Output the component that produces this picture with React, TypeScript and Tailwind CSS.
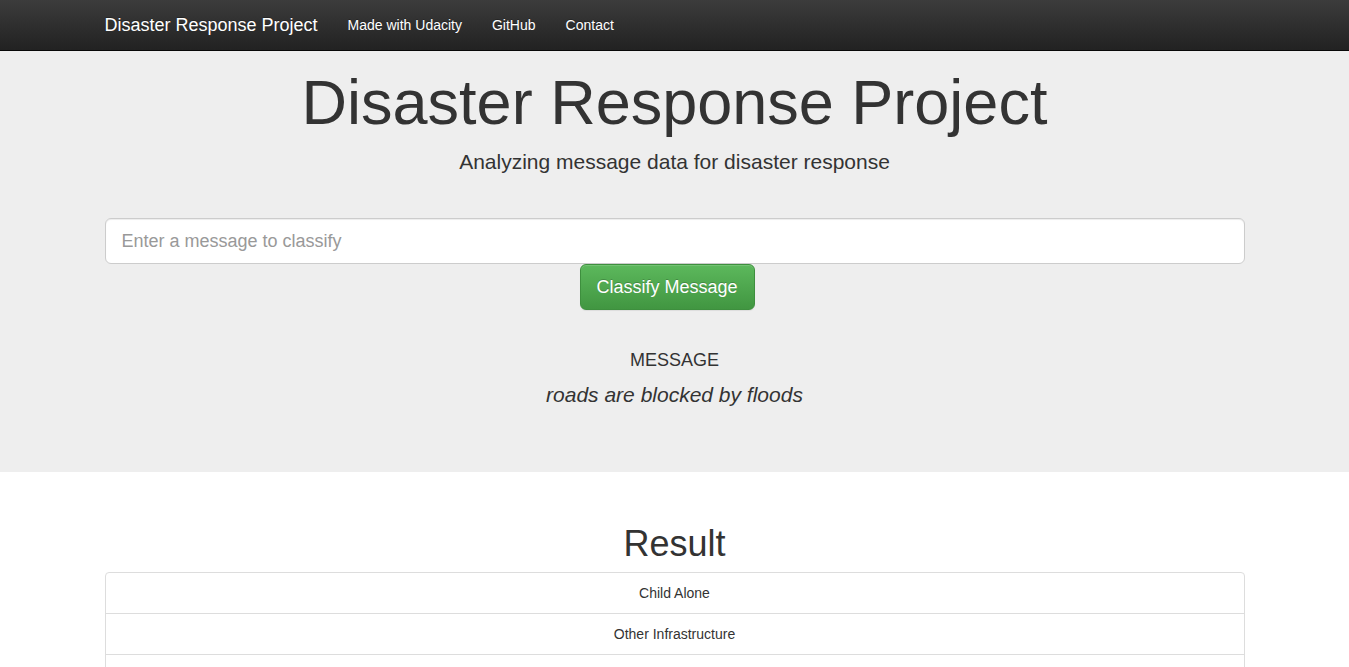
import React from 'react';

const categories = [
  'Child Alone',
  'Other Infrastructure',
  'Infrastructure Related',
  'Aid Centers',
  'Shops',
  'Hospitals',
  'Tools',
  'Fire',
  'Missing People',
  'Offer',
];

const navLinks = ['Made with Udacity', 'GitHub', 'Contact'];

export default function App() {
  return (
    <div className="min-h-screen bg-white text-[#333] font-['Liberation_Sans',Arial,sans-serif]">
      <nav className="h-[51px] border-b border-[#080808] bg-gradient-to-b from-[#3c3c3c] to-[#222]">
        <div className="w-[1170px] mx-auto px-[15px] h-[50px] flex items-center">
          <a className="text-[18px] leading-[20px] text-white pr-[15px] [text-shadow:0_-1px_0_rgba(0,0,0,0.25)]">
            Disaster Response Project
          </a>
          {navLinks.map((l) => (
            <a
              key={l}
              className="text-[14px] leading-[20px] text-white px-[15px] [text-shadow:0_-1px_0_rgba(0,0,0,0.25)]"
            >
              {l}
            </a>
          ))}
        </div>
      </nav>

      <div className="bg-[#eee] pt-[17px] pb-[62px]">
        <div className="w-[1170px] mx-auto px-[15px] text-center">
          <h1 className="text-[63px] leading-[69px] text-[#333]">Disaster Response Project</h1>
          <p className="mt-[10px] text-[21px] leading-[30px]">
            Analyzing message data for disaster response
          </p>
          <input
            className="mt-[41px] block w-full h-[46px] px-[16px] text-[18px] bg-white border border-[#ccc] rounded-[6px] shadow-[inset_0_1px_1px_rgba(0,0,0,0.075)] placeholder:text-[#999] outline-none"
            placeholder="Enter a message to classify"
          />
          <div className="flex">
            <button className="ml-[475px] w-[175px] h-[46px] text-[18px] text-white rounded-[6px] border border-[#3e8f3e] bg-gradient-to-b from-[#5cb85c] to-[#419641] shadow-[inset_0_1px_0_rgba(255,255,255,0.15),0_1px_1px_rgba(0,0,0,0.075)] [text-shadow:0_-1px_0_rgba(0,0,0,0.2)]">
              Classify Message
            </button>
          </div>
          <h4 className="mt-[40px] text-[18px] leading-[20px]">MESSAGE</h4>
          <p className="mt-[10px] text-[21px] leading-[30px] italic">roads are blocked by floods</p>
        </div>
      </div>

      <div className="w-[1170px] mx-auto px-[15px] pt-[52px]">
        <h1 className="text-[36px] leading-[40px] text-center">Result</h1>
        <ul className="mt-[8px] border border-[#ddd] rounded-[4px] divide-y divide-[#ddd]">
          {categories.map((c) => (
            <li key={c} className="py-[10px] leading-[20px] text-center text-[14px]">
              {c}
            </li>
          ))}
        </ul>
      </div>
    </div>
  );
}
